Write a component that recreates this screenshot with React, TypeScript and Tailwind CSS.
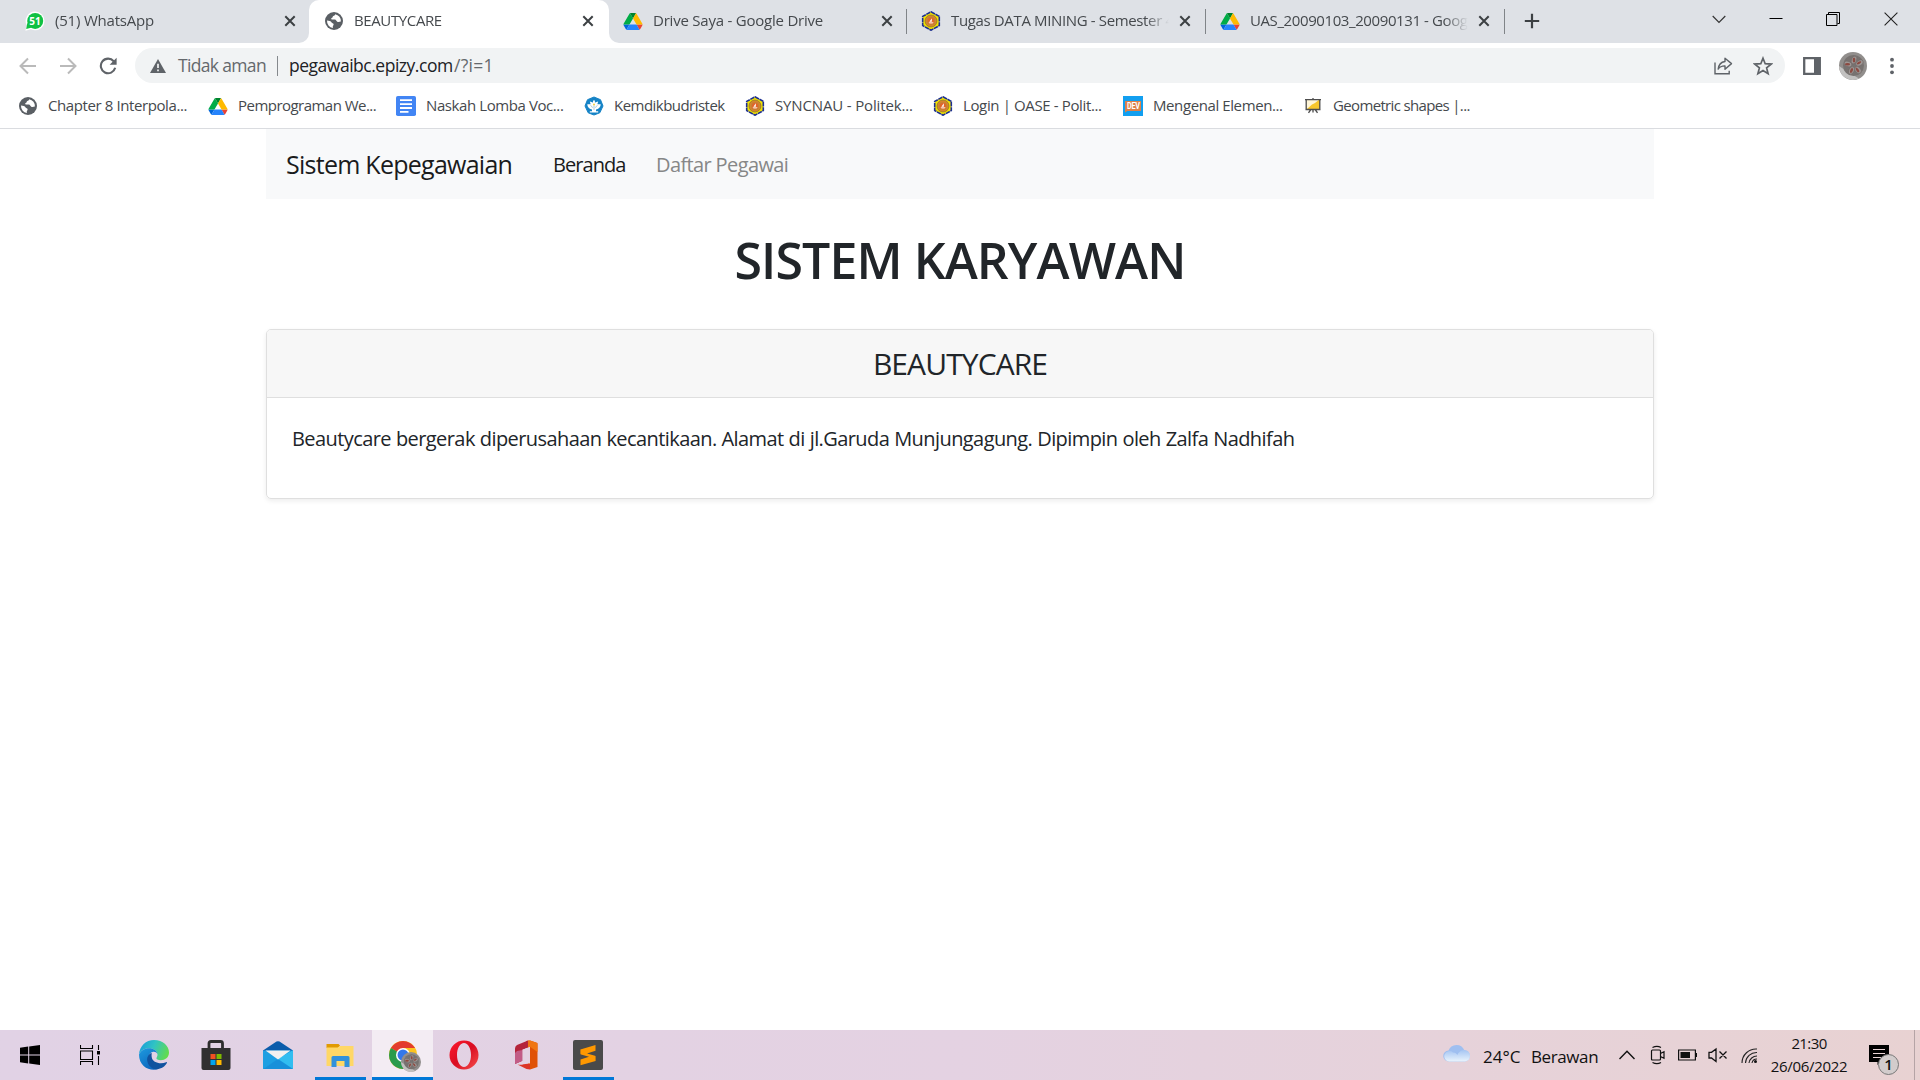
import React from 'react';

function WhatsAppIcon() {
  return (
    <svg viewBox="0 0 20 20" className="size-5 shrink-0">
      <path d="M10.2.6a9.3 9.3 0 0 1 0 18.6c-1.500 0-2.900-.3-4.200-1L.4 19.800l1.500-5.300A9.300 9.300 0 0 1 10.200.6z" fill="#fff" />
      <circle cx="10.200" cy="9.900" r="8" fill="#10c143" />
      <path d="M2.300 12l-1.100 6.100 5.800-1.500z" fill="#10c143" />
      <text x="10" y="13.700" textAnchor="middle" fontSize="10" fontWeight="700" fill="#fff" fontFamily="Open Sans, sans-serif">51</text>
    </svg>
  );
}

function GlobeIcon() {
  return (
    <svg viewBox="0 0 18 18" className="size-[18px] shrink-0 mx-px">
      <circle cx="9" cy="9" r="9" fill="#5a5f64" />
      <path d="M10.200 2.200c-.2 1.500-1.100 1.300-1.900 1.700-.9.500-.4 1.700-1.600 2.100-.8.300-.6 1.300.2 1.500 1.500.2 3.200-.3 4.100.7.900 1.100 1.100 1.900 2.500 1.900 1 0 1.600-.6 2.400-.5a7 7 0 0 0-5.700-7.400z" fill="#fff" />
      <path d="M2 8.600c1.900.2 4 .5 4.600 2 .4 1.100 1.700.5 2 1.700.2 1-.9 1.400-.8 2.400 0 .6.200 1 .1 1.300A7 7 0 0 1 2 8.600z" fill="#fff" />
    </svg>
  );
}

function DriveIcon() {
  return (
    <svg viewBox="0 0 87.3 78" className="h-[17px] w-5 shrink-0">
      <path d="m6.6 66.850 3.850 6.650c.8 1.400 1.950 2.500 3.300 3.300L27.500 53H0c0 1.550.4 3.100 1.200 4.500z" fill="#0066da" />
      <path d="m43.650 25-13.750-23.800c-1.350.8-2.500 1.900-3.300 3.300L1.200 48.500A9.060 9.060 0 0 0 0 53h27.500z" fill="#00ac47" />
      <path d="M73.550 76.800c1.350-.8 2.500-1.900 3.300-3.300l1.600-2.750 7.650-13.250c.8-1.400 1.200-2.950 1.200-4.500H59.800l5.850 11.500z" fill="#ea4335" />
      <path d="M43.650 25 57.400 1.200C56.050.4 54.500 0 52.900 0H34.400c-1.600 0-3.150.45-4.500 1.200z" fill="#00832d" />
      <path d="M59.800 53H27.500L13.750 76.800c1.350.8 2.900 1.200 4.500 1.200h50.800c1.600 0 3.150-.45 4.500-1.200z" fill="#2684fc" />
      <path d="m73.400 26.500-12.700-22c-.8-1.400-1.950-2.500-3.300-3.300L43.650 25 59.800 53h27.450c0-1.550-.4-3.100-1.200-4.500z" fill="#ffba00" />
    </svg>
  );
}

function CampusIcon() {
  return (
    <svg viewBox="0 0 20 20" className="size-5 shrink-0">
      <path d="M10 .8l8.300 4.600v9.200L10 19.200l-8.300-4.600V5.400z" fill="#f4e400" stroke="#1c2f93" strokeWidth="1.600" strokeDasharray="4.500 .6" />
      <circle cx="10" cy="10" r="6" fill="#d9822b" stroke="#8d7a2b" strokeWidth=".8" />
      <circle cx="10" cy="10" r="3.900" fill="#e0652a" stroke="#b98d3a" strokeWidth=".8" />
      <path d="M10.800 7.300v3.400H8.400z" fill="#fff" />
      <path d="M7.500 11.300h5.200l-1.200 1.300H8.600z" fill="#f7e9d8" />
    </svg>
  );
}

function DocsIcon() {
  return (
    <svg viewBox="0 0 20 20" className="size-5 shrink-0">
      <rect width="20" height="20" rx="1.800" fill="#4285f4" />
      <path d="M4 4.200h12M4 8.100h12M4 12h12M4 15.800h8.500" stroke="#fff" strokeWidth="1.800" />
    </svg>
  );
}

function MinistryIcon() {
  return (
    <svg viewBox="0 0 20 20" className="size-5 shrink-0">
      <path d="M10 1l6.500 2.700L19 10l-3.200 6.800L10 19l-5.800-2.200L1 10l2.500-6.300z" fill="#1583c6" stroke="#1583c6" strokeLinejoin="round" />
      <path d="M10 4c.9.800 1.200 1.700.9 2.700 1.300-.3 2-1.100 3.200-1.100 0 1.100-.8 1.700-.6 2.700 1.200.1 2.200-.3 3.300.1-.5 2.800-2.400 4.700-4.800 5.200v1.600h2.200v1.300H5.800v-1.300H8v-1.600c-2.400-.5-4.300-2.400-4.800-5.200 1.100-.4 2.100 0 3.300-.1.200-1-.6-1.600-.6-2.700 1.200 0 1.900.8 3.200 1.100-.3-1 0-1.900.9-2.700z" fill="#fff" />
      <path d="M10 9.500V14M6.500 9.500c1 .3 1.800 1.300 2 2.300M13.500 9.500c-1 .3-1.800 1.300-2 2.300" stroke="#7aa9c4" strokeWidth=".6" fill="none" />
      <circle cx="10" cy="8.400" r="1" fill="#f3cf3c" />
    </svg>
  );
}

function DevIcon() {
  return (
    <svg viewBox="0 0 20 20" className="size-5 shrink-0">
      <rect width="20" height="20" fill="#129ff0" />
      <path d="M2 5h16v10H4.300L2 16.500z" fill="#dd8149" />
      <text x="10.300" y="13.100" textAnchor="middle" textLength="12.500" lengthAdjust="spacingAndGlyphs" fontSize="8.500" fontWeight="700" fill="#fff" fontFamily="Roboto, sans-serif">DEV</text>
    </svg>
  );
}

function BoardIcon() {
  return (
    <svg viewBox="0 0 20 20" className="size-5 shrink-0">
      <path d="M3 4h14v9H3z" fill="#fff6d8" />
      <path d="M4 13l5-4.500L12 7l5-4v10z" fill="#f8c72c" />
      <path d="M2 3.700h16M3.200 4v9M16.800 4v9M2.500 13.500h15M10 2v2M10 13.500v3M7.500 14l-2 2.800M12.500 14l2 2.800" stroke="#4d4d4d" strokeWidth="1.300" fill="none" />
    </svg>
  );
}

function TabClose() {
  return (
    <svg viewBox="0 0 20 20" className="size-5 ml-auto shrink-0">
      <path d="M5.300 5.300l9.400 9.400M14.700 5.300l-9.400 9.400" stroke="#3c4043" strokeWidth="2" />
    </svg>
  );
}

function TabBody({ icon, title, track }: { icon: React.ReactNode; title: string; track: string }) {
  return (
    <>
      {icon}
      <div className="mb-[2px] ml-[10px] w-[218px] overflow-hidden whitespace-nowrap text-[15px] leading-5 text-[#45494d] [mask-image:linear-gradient(to_right,#000_89%,transparent)]">
        <span className={track}>{title}</span>
      </div>
      <TabClose />
    </>
  );
}

function TabStrip() {
  return (
    <div className="flex h-[43px] bg-[#dee1e6] pl-[10px]">
      <div className="flex h-[42px] w-[299px] items-center pl-[15px] pr-[9px]">
        <TabBody icon={<WhatsAppIcon />} title="(51) WhatsApp" track="tracking-[-0.2px]" />
      </div>
      <div className="relative flex h-[43px] w-[300px] items-center rounded-t-[10px] bg-white pb-px pl-[15px] pr-[11px]">
        <span className="absolute -left-[10px] bottom-0 size-[10px] bg-white">
          <span className="block size-full rounded-br-[10px] bg-[#dee1e6]" />
        </span>
        <span className="absolute -right-[10px] bottom-0 size-[10px] bg-white">
          <span className="block size-full rounded-bl-[10px] bg-[#dee1e6]" />
        </span>
        <TabBody icon={<GlobeIcon />} title="BEAUTYCARE" track="tracking-[-0.38px]" />
      </div>
      <div className="flex h-[42px] w-[297px] items-center pl-[14px] pr-[9px]">
        <TabBody icon={<DriveIcon />} title="Drive Saya - Google Drive" track="tracking-[-0.22px]" />
      </div>
      <div className="flex h-[42px] w-[299px] items-center pr-[10px]">
        <span className="mr-[14px] h-[25px] w-px bg-[#808488]" />
        <TabBody icon={<CampusIcon />} title="Tugas DATA MINING - Semester 4" track="tracking-[-0.36px]" />
      </div>
      <div className="flex h-[42px] w-[299px] items-center pr-[10px]">
        <span className="mr-[14px] h-[25px] w-px bg-[#808488]" />
        <TabBody icon={<DriveIcon />} title="UAS_20090103_20090131 - Google" track="tracking-[-0.4px]" />
      </div>
      <div className="flex h-[42px] items-center">
        <span className="h-[25px] w-px bg-[#808488]" />
        <svg viewBox="0 0 16 16" className="ml-[19px] size-4">
          <path d="M8 .8v14.400M.8 8h14.400" stroke="#3c4043" strokeWidth="2.200" />
        </svg>
      </div>
      <div className="ml-auto flex h-[37px] items-center text-black">
        <svg viewBox="0 0 14 14" className="mr-[43px] size-[14px]">
          <path d="M.7 4l6.300 6.300L13.300 4" fill="none" stroke="#333" strokeWidth="1.200" />
        </svg>
        <svg viewBox="0 0 14 14" className="mr-[43px] size-[14px]">
          <path d="M.5 6.500h13" stroke="#000" />
        </svg>
        <svg viewBox="0 0 14 14" className="mr-[44px] size-[14px]">
          <path d="M.5 2.500h10.500v11H.5zM2.500 2.500v-2h11v11h-2" fill="none" stroke="#000" />
        </svg>
        <svg viewBox="0 0 14 14" className="mr-[22px] size-[14px]">
          <path d="M.6.6l12.800 12.800M13.400.6L.6 13.400" stroke="#222" strokeWidth="1.100" />
        </svg>
      </div>
    </div>
  );
}

function Avatar({ className }: { className: string }) {
  return (
    <svg viewBox="0 0 28 28" className={className}>
      <circle cx="14" cy="14" r="14" fill="#918e8c" />
      <path d="M0 14a14 14 0 0 0 20 12.600L9 20z" fill="#c2c1c0" />
      <circle cx="14.500" cy="13.500" r="10.500" fill="#777270" />
      <g fill="#9c9593" stroke="#6b6260" strokeWidth=".5">
        <ellipse cx="9" cy="12" rx="4" ry="2.700" transform="rotate(20 9 12)" />
        <ellipse cx="15" cy="8" rx="2.600" ry="4" transform="rotate(20 15 8)" />
        <ellipse cx="20.500" cy="11" rx="4" ry="2.600" transform="rotate(-30 20.500 11)" />
        <ellipse cx="19" cy="18" rx="2.800" ry="4" transform="rotate(-40 19 18)" />
        <ellipse cx="12.500" cy="18.500" rx="2.600" ry="4" transform="rotate(25 12.500 18.500)" />
      </g>
      <g fill="#8c4a41">
        <ellipse cx="8.500" cy="12.300" rx="2.600" ry="1.300" />
        <ellipse cx="15" cy="8" rx="1.300" ry="2.500" />
        <ellipse cx="20" cy="10.800" rx="2.400" ry="1.100" transform="rotate(-30 20 10.800)" />
        <ellipse cx="18.500" cy="18" rx="1.200" ry="2.600" transform="rotate(-35 18.500 18)" />
        <ellipse cx="12.500" cy="18.500" rx="1.300" ry="2.600" transform="rotate(25 12.500 18.500)" />
      </g>
    </svg>
  );
}

function AddressBar() {
  return (
    <div className="flex h-[45px] items-center bg-white">
      <svg viewBox="0 0 18 18" className="ml-[19px] size-[18px]">
        <path d="M17 9H2M9 1.500L1.500 9 9 16.500" fill="none" stroke="#bababa" strokeWidth="2" />
      </svg>
      <svg viewBox="0 0 18 18" className="ml-[22px] size-[18px]">
        <path d="M1 9h15M9 1.500L16.500 9 9 16.500" fill="none" stroke="#bababa" strokeWidth="2" />
      </svg>
      <svg viewBox="0 0 18 18" className="ml-[22px] size-[18px]">
        <path d="M14.700 4.200A7.300 7.300 0 1 0 16.200 10.800" fill="none" stroke="#5f6368" strokeWidth="2.100" />
        <path d="M17.600.8v7h-7z" fill="#5f6368" />
      </svg>
      <div className="ml-[18px] flex h-[35px] w-[1650px] items-center rounded-full bg-[#f1f3f4] text-[17.5px] text-[#64686c]">
        <svg viewBox="0 0 16 14" className="ml-[15px] h-[14px] w-4">
          <path d="M8 0l8 14H0z" fill="#5f6368" />
          <path d="M8 4.800v4.200M8 10.400v1.900" stroke="#f1f3f4" strokeWidth="1.700" />
        </svg>
        <span className="ml-3 w-[98px] tracking-[-0.66px]">Tidak aman</span>
        <span className="ml-px h-5 w-px bg-[#85898d]" />
        <span className="ml-[11px] w-[165px] tracking-[-0.48px] text-[#202124]">pegawaibc.epizy.com</span>
        <span className="tracking-[0.25px]">/?i=1</span>
        <svg viewBox="0 0 20 20" className="ml-auto size-5">
          <path d="M2 6.500V17.800h14.200v-3" fill="none" stroke="#5f6368" strokeWidth="1.400" />
          <path d="M12 2.300l6.500 5.300L12 13.200V9.900c-3.300-.1-5.300.9-6.800 3.200.4-3.900 2.600-7 6.800-7.600z" fill="none" stroke="#5f6368" strokeWidth="1.400" strokeLinejoin="round" />
        </svg>
        <svg viewBox="0 0 20 20" className="ml-5 mr-[12px] size-5">
          <path d="M10 2.200l2.200 5.500 6 .4-4.600 3.800 1.500 5.800L10 14.500l-5.100 3.200 1.500-5.800L1.800 8.100l6-.4z" fill="none" stroke="#5f6368" strokeWidth="1.700" />
        </svg>
      </div>
      <svg viewBox="0 0 18 18" className="ml-[18px] size-[18px]">
        <path d="M1.200 1.200h15.600v15.600H1.200z" fill="#fff" stroke="#5f6368" strokeWidth="2.300" />
        <path d="M11 1h6v16h-6z" fill="#5f6368" />
      </svg>
      <Avatar className="ml-[18px] size-7" />
      <svg viewBox="0 0 6 18" className="ml-[22px] h-[18px] w-1.5">
        <g fill="#5f6368">
          <circle cx="3" cy="2.700" r="1.900" />
          <circle cx="3" cy="9" r="1.900" />
          <circle cx="3" cy="15.300" r="1.900" />
        </g>
      </svg>
    </div>
  );
}

const bookmarks = [
  { icon: <GlobeIcon />, label: 'Chapter 8 Interpola...', box: 'w-[190px] tracking-[-0.4px]' },
  { icon: <DriveIcon />, label: 'Pemprograman We...', box: 'w-[188px] tracking-[-0.53px]' },
  { icon: <DocsIcon />, label: 'Naskah Lomba Voc...', box: 'w-[188px] tracking-[-0.41px]' },
  { icon: <MinistryIcon />, label: 'Kemdikbudristek', box: 'w-[161px] tracking-[-0.53px]' },
  { icon: <CampusIcon />, label: 'SYNCNAU - Politek...', box: 'w-[188px] tracking-[-0.15px]' },
  { icon: <CampusIcon />, label: 'Login | OASE - Polit...', box: 'w-[190px] tracking-[-0.37px]' },
  { icon: <DevIcon />, label: 'Mengenal Elemen...', box: 'w-[180px] tracking-[-0.4px]' },
  { icon: <BoardIcon />, label: 'Geometric shapes |...', box: 'w-[180px] tracking-[-0.65px]' },
];

function BookmarksBar() {
  return (
    <div className="flex h-[41px] items-start border-b border-[#dadce0] bg-white pl-[18px] pt-[7px]">
      {bookmarks.map((b) => (
        <div key={b.label} className={`flex h-[22px] items-center whitespace-nowrap text-[15px] text-[#45494d] ${b.box}`}>
          {b.icon}
          <span className="mb-[2px] ml-[10px]">{b.label}</span>
        </div>
      ))}
    </div>
  );
}

function Page() {
  return (
    <main className="mx-auto w-[1388px] grow text-[#212529]">
      <nav className="flex h-[70px] items-center bg-[#f8f9fa] pl-5 pt-[2px] text-[20px]">
        <span className="w-[267px] text-[25px] tracking-[-0.74px] text-[#1a1b1c]">Sistem Kepegawaian</span>
        <span className="w-[103px] tracking-[-0.95px] text-[#1a1b1c]">Beranda</span>
        <span className="tracking-[-0.62px] text-[#868787]">Daftar Pegawai</span>
      </nav>
      <h1 className="mb-[39px] mt-[31px] text-center text-[50px] font-semibold leading-[60px] tracking-[-0.9px]">SISTEM KARYAWAN</h1>
      <section className="h-[170px] rounded-[5px] border border-[#dfdfdf] shadow-[0_2px_5px_rgba(0,0,0,0.075)]">
        <h2 className="h-[68px] rounded-t-[4px] border-b border-[#dfdfdf] bg-[#f7f7f7] text-center text-[30px] leading-[67px] tracking-[-0.9px]">BEAUTYCARE</h2>
        <p className="p-[25px] pt-[26px] text-[20px] leading-[30px] tracking-[-0.58px] [word-spacing:0.35px]">
          Beautycare bergerak diperusahaan kecantikaan. Alamat di jl.Garuda Munjungagung. Dipimpin oleh Zalfa Nadhifah
        </p>
      </section>
    </main>
  );
}

function TaskSlot({ children, state = 'idle' }: { children: React.ReactNode; state?: 'idle' | 'open' | 'active' }) {
  return (
    <div className={`flex h-[50px] flex-col items-center ${state === 'active' ? 'ml-px w-[61px] bg-[#f3ecf3]' : 'w-[62px]'}`}>
      <div className="flex h-[47px] items-center pt-[3px]">{children}</div>
      {state === 'open' && <div className="h-[3px] w-[51px] bg-[#0078d7]" />}
      {state === 'active' && <div className="h-[3px] w-full bg-[#0078d7]" />}
    </div>
  );
}

function Taskbar() {
  return (
    <footer className="flex h-[50px] bg-gradient-to-r from-[#e1d2e5] via-[#e4d2e2] to-[#e8d2d2]">
      <div className="flex h-[50px] w-[60px] items-center justify-center">
        <svg viewBox="0 0 20 20" className="size-5">
          <path d="M0 2.800l8.200-1.200v7.900H0zM9.200 1.400L20 0v9.500H9.200zM0 10.500h8.200v7.900L0 17.300zM9.200 10.500H20V20L9.200 18.600z" fill="#000" />
        </svg>
      </div>
      <div className="flex h-[50px] w-[63px] items-center pl-5">
        <svg viewBox="0 0 20 20" className="size-5">
          <path d="M.5 0v3.500h12V0M.5 6h12v8.500H.5zM.5 20v-3.500h12V20M18.500 0v5M18.500 11v9" fill="none" stroke="#000" strokeWidth="1.100" />
          <path d="M17 6h3v3.500h-3z" />
        </svg>
      </div>
      <TaskSlot>
        <svg viewBox="0 0 30 30" className="size-[30px]">
          <defs>
            <linearGradient id="edgeTop" x1="0" y1=".3" x2="1" y2=".6">
              <stop offset="0" stopColor="#1a9ed9" />
              <stop offset=".45" stopColor="#30c3c4" />
              <stop offset="1" stopColor="#63dc4b" />
            </linearGradient>
            <linearGradient id="edgeLeft" x1="0" y1="0" x2=".6" y2="1">
              <stop offset="0" stopColor="#1e9bdf" />
              <stop offset="1" stopColor="#0c66bd" />
            </linearGradient>
          </defs>
          <path d="M0 14.500C.5 6 7 0 15 0c9 0 15 6 15 12.500 0 5-4 7.700-8.200 7.700-3 0-4.400-.9-4.400-1.900 0-.8 1.100-1.400 1.100-3.500 0-3.800-4-6.600-8.500-6.600C5.500 8.200 1.500 10.500 0 14.500z" fill="url(#edgeTop)" />
          <path d="M0 14.500C1.500 10.500 5.500 8.200 10 8.200c4.500 0 8 2.700 8.500 5.800-1-1.700-2.500-2.500-4.300-2.200-3.400.7-5.200 4-4.400 7.700C11 25 16 28 20 28.800 12 32 0 27.500 0 14.500z" fill="url(#edgeLeft)" />
          <path d="M12 13c-3.500 2-5 6.200-3 10.400 2.300 4.500 7.200 7 12 5.200 3-1.100 5.500-3.200 6.900-5.700.3-.6-.2-1-.8-.7-5.600 2.600-13.800.4-14.400-5.200-.2-1.500-.2-2.800.2-3.600z" fill="#10539f" />
        </svg>
      </TaskSlot>
      <TaskSlot>
        <svg viewBox="0 0 30 30" className="size-[30px]">
          <path d="M8 9V3.500Q8 1.500 10 1.500h9.500q2 0 2 2V9" fill="none" stroke="#2d2d2d" strokeWidth="2.800" />
          <path d="M.5 8h29v20q0 2-2 2h-25q-2 0-2-2z" fill="#303030" />
          <path d="M9.500 14h5v5h-5z" fill="#f25022" />
          <path d="M15.500 14h5v5h-5z" fill="#7fba00" />
          <path d="M9.500 20h5v5h-5z" fill="#00a4ef" />
          <path d="M15.500 20h5v5h-5z" fill="#ffb900" />
        </svg>
      </TaskSlot>
      <TaskSlot>
        <svg viewBox="0 0 30 30" className="size-[30px]">
          <path d="M0 10.500L13.500 1.600q1.500-.9 3 0L30 10.500V14H0z" fill="#0b5cab" />
          <path d="M0 10.500h30V29H0z" fill="#1d9fe2" />
          <path d="M30 10.500V29L15 19z" fill="#3bcbf6" />
          <path d="M0 29l30-18.500V29z" fill="#31bdf0" />
          <path d="M15 19l15 10H0z" fill="#1790da" />
          <path d="M2.500 10.500h25L15 19.500z" fill="#f2f1f0" />
        </svg>
      </TaskSlot>
      <TaskSlot state="open">
        <svg viewBox="0 0 28 24" className="h-6 w-7">
          <path d="M.5 1h12l1.500 1.500L12 5H.5z" fill="#e19a02" />
          <path d="M.5 4.500h11L14 3h13.500v20H.5z" fill="#ffd766" />
          <path d="M5.500 24V14.500q0-1.500 1.500-1.500h15q1.500 0 1.500 1.500V24h-5v-6h-8v6z" fill="#3291dc" />
        </svg>
      </TaskSlot>
      <TaskSlot state="active">
        <div className="relative size-7">
          <svg viewBox="0 0 28 28" className="size-7">
            <circle cx="14" cy="14" r="14" fill="#fcc31e" />
            <path d="M14 14L1.900 7A14 14 0 0 1 26.100 7H14z" fill="#e33b2e" />
            <path d="M1.900 7A14 14 0 0 0 14 28l6.100-10.500z" fill="#2a9b4b" />
            <circle cx="14" cy="14" r="7" fill="#fff" />
            <circle cx="14" cy="14" r="5.500" fill="#3478ea" />
          </svg>
          <Avatar className="absolute -bottom-[3px] -right-[4px] size-5" />
        </div>
      </TaskSlot>
      <TaskSlot>
        <svg viewBox="0 0 30 30" className="size-[30px]">
          <defs>
            <linearGradient id="operaRing" x1="0" y1="0" x2="1" y2="1">
              <stop offset="0" stopColor="#ff1b2d" />
              <stop offset=".5" stopColor="#d90d22" />
              <stop offset="1" stopColor="#f7504c" />
            </linearGradient>
          </defs>
          <path fillRule="evenodd" d="M15 .5a14.500 14.500 0 1 1 0 29 14.500 14.500 0 0 1 0-29zm0 2.600c-3.900 0-7 5.200-7 11.900S11.100 26.900 15 26.900 22 21.700 22 15 18.900 3.100 15 3.100z" fill="url(#operaRing)" />
        </svg>
      </TaskSlot>
      <TaskSlot>
        <svg viewBox="0 0 24 30" className="h-[30px] w-6">
          <path d="M12 1l4-.5 7.500 2.500v24L16 29.500z" fill="#e05206" />
          <path d="M14 .5l2 6.300-7.500 3v10.900L1 24V8.500Q1 6 3 5z" fill="#b4243a" />
          <path d="M1 13v11l7.500-3.300V10L3 11z" fill="#c25d86" />
          <path d="M3.500 24.500q3.500.8 6-.2L16 23.500v6L12.500 29z" fill="#dc3526" />
          <path d="M14 .5l2 0 6 2q1.500.6 1.500 2V12L16 6.800V23.500H14z" fill="#f07612" />
          <path d="M8.500 9.800L16 6.800v16.700l-7.500-2.300z" fill="#e4d3e2" />
        </svg>
      </TaskSlot>
      <TaskSlot state="open">
        <svg viewBox="0 0 30 30" className="size-[30px]">
          <rect width="30" height="30" rx="2" fill="#4a4a4a" />
          <path d="M22.500 5v5.800L14 13.500l8 2.300q.6.200.6.800v4.400L7.500 25.300v-5.700l8.500-2.800-8-2.300q-.6-.2-.6-.8V9.500z" fill="#ff9800" />
        </svg>
      </TaskSlot>
      <div className="ml-auto flex h-[50px] items-center text-[#111]">
        <svg viewBox="0 0 28 18" className="-mt-1 mr-3 h-[18px] w-7">
          <defs>
            <linearGradient id="cloud" x1="0" y1="0" x2="0" y2="1">
              <stop offset="0" stopColor="#a6c5f2" />
              <stop offset="1" stopColor="#e9f4fd" />
            </linearGradient>
          </defs>
          <path d="M6 17.500a5.500 5.500 0 0 1-.5-11 8.500 8.500 0 0 1 15.800-.3A5.700 5.700 0 0 1 22 17.500z" fill="#9fbff0" />
          <path d="M6 17.500a5.200 5.200 0 1 1 4-9c3 0 3.800 1.500 4.300 2.500a7 7 0 0 1 7.700-4.800 5.700 5.700 0 0 1 0 11.300z" fill="url(#cloud)" />
        </svg>
        <span className="mt-[3px] w-[48px] text-[17px] leading-6">24°C</span>
        <span className="mt-[3px] w-[88px] text-[17px] leading-6 tracking-[-0.4px]">Berawan</span>
        <svg viewBox="0 0 16 16" className="size-4">
          <path d="M.5 12L8 4.300 15.500 12" fill="none" stroke="#111" strokeWidth="1.400" />
        </svg>
        <svg viewBox="0 0 16 20" className="ml-[15px] h-5 w-4">
          <path d="M2.500 5h7q1 0 1 1v8q0 1-1 1h-7q-1 0-1-1V6q0-1 1-1zM10.500 8.500L14 6.700v6.600l-3.500-1.800M2.500 2.500Q7 .3 11 2.500M2.500 17.500q4.500 2.200 8.500 0" fill="none" stroke="#111" strokeWidth="1.200" />
        </svg>
        <svg viewBox="0 0 20 12" className="ml-[12px] h-3 w-5">
          <path d="M.6 1h16.800v10H.6z" fill="none" stroke="#111" strokeWidth="1.200" />
          <path d="M2.500 3h9.500v6H2.500zM17.500 4H19v4h-1.500z" fill="#111" />
        </svg>
        <svg viewBox="0 0 20 16" className="ml-[10px] h-4 w-5">
          <path d="M1 5.300h2.500L8 2v12.500L3.500 11H1zM11.500 4.500l7 7M18.500 4.500l-7 7" fill="none" stroke="#111" strokeWidth="1.300" />
        </svg>
        <svg viewBox="0 0 17 17" className="ml-[13px] size-[17px]">
          <path d="M1 16A14 14 0 0 1 16 2M4.500 16A11 11 0 0 1 16 5.500M8 16a8 8 0 0 1 8-7M11 16a5 5 0 0 1 5-4" fill="none" stroke="#222" strokeWidth="1.100" />
          <circle cx="14.500" cy="14.500" r="1.500" fill="#111" />
        </svg>
        <div className="flex w-[102px] flex-col items-center text-center text-[15px] leading-[23px]">
          <span className="tracking-[-0.6px]">21:30</span>
          <span className="tracking-[-0.3px]">26/06/2022</span>
        </div>
        <div className="relative ml-[9px] h-5 w-[30px]">
          <svg viewBox="0 0 20 20" className="size-5">
            <path d="M0 0h20v17H11.500L8.500 20V17H0z" fill="#000" />
            <path d="M4 4.500h12M4 8.500h12M4 12.500h8" stroke="#e8d3d5" strokeWidth="1.100" />
          </svg>
          <span className="absolute left-[9px] top-[9px] flex size-[21px] items-center justify-center rounded-full border border-[#777] bg-[#d2cccc] text-[15px] font-semibold leading-none">1</span>
        </div>
        <div className="ml-[15px] h-[50px] w-[6px] border-l border-[#b5a4a6]" />
      </div>
    </footer>
  );
}

export default function App() {
  return (
    <div className="flex h-[1080px] w-[1920px] flex-col overflow-hidden bg-white font-['Open_Sans','Noto_Sans',sans-serif]">
      <TabStrip />
      <AddressBar />
      <BookmarksBar />
      <Page />
      <Taskbar />
    </div>
  );
}
